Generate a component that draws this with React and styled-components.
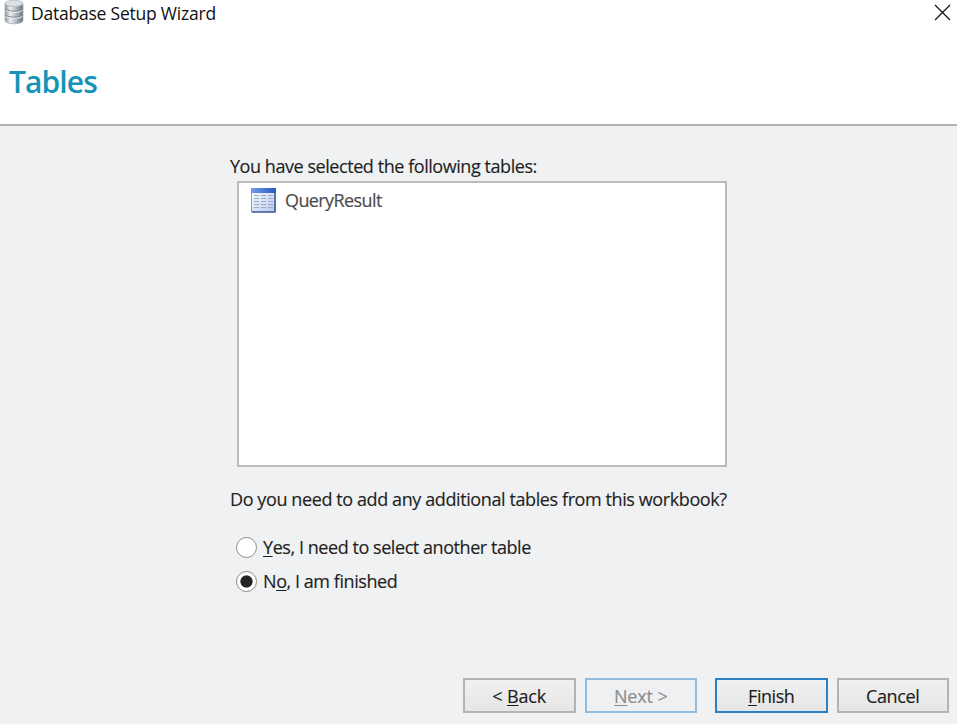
import React from "react";
import styled, { createGlobalStyle } from "styled-components";

const GlobalStyle = createGlobalStyle`
  * { box-sizing: border-box; }
  html, body { margin: 0; height: 100%; overflow: hidden; }
  body { font-family: "Open Sans", "Noto Sans", sans-serif; font-size: 18px; color: #1f1f1f; background: #f0f1f3; }
`;

const Window = styled.div`
  display: flex;
  flex-direction: column;
  width: 957px;
  height: 724px;
  background: #f0f1f3;
`;

const Header = styled.header`
  display: flex;
  flex-direction: column;
  height: 126px;
  background: #fff;
  border-bottom: 2px solid #b0b2b4;
`;

const TitleBar = styled.div`
  display: flex;
  align-items: center;
  height: 25px;
  padding: 0 6px 0 4px;
`;

const Text = styled.span`
  white-space: pre;
  letter-spacing: ${(p) => (p.$spacing === undefined ? -0.44 : p.$spacing)}px;
  -webkit-text-stroke: 0.15px currentColor;
  u { text-decoration-thickness: 1px; text-underline-offset: 2px; text-decoration-skip-ink: none; }
`;

const WindowTitle = styled(Text)`
  flex: 1;
  margin-left: 7px;
  font-size: 17.5px;
  color: #111;
  -webkit-text-stroke: 0;
`;

const CloseButton = styled.button`
  display: flex;
  padding: 0;
  border: 0;
  background: none;
`;

const PageTitle = styled.h1`
  margin: 36px 0 0 9px;
  font-size: 30px;
  line-height: 42px;
  font-weight: 600;
  letter-spacing: -0.9px;
  color: #1893b8;
`;

const Content = styled.main`
  display: flex;
  flex-direction: column;
  flex: 1;
  padding: 27px 0 0 230px;
`;

const Prompt = styled.p`
  display: flex;
  margin: 0;
  line-height: 26px;
`;

const TableList = styled.ul`
  width: 490px;
  height: 286px;
  margin: 2px 0 0 7px;
  padding: 4px 0 0 12px;
  list-style: none;
  background: #fff;
  border: 2px solid #b9bbbd;
`;

const TableItem = styled.li`
  display: flex;
  align-items: center;
  gap: 9px;
  height: 26px;
  color: #4a4a4a;
`;

const Question = styled(Prompt)`
  margin-top: 19px;
`;

const Options = styled.div`
  display: flex;
  flex-direction: column;
  gap: 8px;
  margin: 22px 0 0 6px;
`;

const Option = styled.label`
  display: flex;
  align-items: center;
  gap: 6px;
  height: 26px;
`;

const Radio = styled.input`
  appearance: none;
  width: 21px;
  height: 21px;
  margin: 0;
  border: 1.5px solid #8b8b8b;
  border-radius: 50%;
  background: ${(p) => (p.checked ? "radial-gradient(circle, #242424 5.7px, #fff 6.5px)" : "#fff")};
`;

const Footer = styled.footer`
  display: flex;
  justify-content: flex-end;
  gap: 9px;
  height: 46px;
  padding-right: 8px;
`;

const Button = styled.button`
  width: 112.5px;
  height: 35px;
  margin: 0 0 0 ${(p) => p.$offset || 0}px;
  padding: 0;
  border: 2px solid ${(p) => p.$border || "#b2b3b5"};
  background: ${(p) => (p.disabled ? "#eff0f2" : "linear-gradient(#f0f0f0, #e6e6e6)")};
  font: inherit;
  color: ${(p) => (p.disabled ? "#8b8d90" : "#1c1c1c")};
`;

const Icon = styled.svg`
  display: block;
  flex: none;
`;

const DatabaseIcon = () => (
  <Icon width="20" height="25" viewBox="0 0 20 26" preserveAspectRatio="none">
    <defs>
      <linearGradient id="metal">
        <stop offset="0" stopColor="#8b949c" />
        <stop offset=".3" stopColor="#eceef0" />
        <stop offset=".55" stopColor="#bcc3c9" />
        <stop offset="1" stopColor="#69737d" />
      </linearGradient>
    </defs>
    <path d="M1 4V21C1 26 19 26 19 21V4Z" fill="url(#metal)" stroke="#a1a9b0" strokeWidth=".7" />
    <ellipse cx="10" cy="3.5" rx="9" ry="3.2" fill="#dde0e3" stroke="#a7aeb5" strokeWidth=".7" />
    <path d="M1 9.2C3 12.5 17 12.5 19 9.2M1 15.4C3 18.7 17 18.7 19 15.4" fill="none" stroke="#7b858e" strokeWidth="1.1" />
    <path d="M1.5 10.5C4 13.7 16 13.7 18.5 10.5M1.5 16.7C4 19.9 16 19.9 18.5 16.7" fill="none" stroke="#edf0f2" strokeWidth="1" />
  </Icon>
);

const TableIcon = () => (
  <Icon width="25" height="25" viewBox="0 0 25 25">
    <defs>
      <linearGradient id="sheet" x2="1" y2="1">
        <stop stopColor="#fff" />
        <stop offset="1" stopColor="#b5c8eb" />
      </linearGradient>
      <linearGradient id="heading">
        <stop stopColor="#7499e8" />
        <stop offset="1" stopColor="#285ac4" />
      </linearGradient>
    </defs>
    <path d="M.5.5H24V24H.5Z" fill="url(#sheet)" stroke="#8d9fc6" />
    <path d="M0 0H25V5H0Z" fill="url(#heading)" />
    <path d="M24 4V24H1" fill="none" stroke="#4b629a" strokeWidth="1.7" />
    <path d="M3 7.5H22M3 10.5H22M3 13.5H22M3 16.5H22M3 19.5H22" stroke="#9eabc4" strokeDasharray="5 2" />
  </Icon>
);

const CloseIcon = () => (
  <Icon width="17" height="17" viewBox="0 0 17 17">
    <path d="M1 1L16 16M16 1L1 16" stroke="#111" strokeWidth="1.2" />
  </Icon>
);

export default function App() {
  const [answer, setAnswer] = React.useState("no");
  return (
    <Window>
      <GlobalStyle />
      <Header>
        <TitleBar>
          <DatabaseIcon />
          <WindowTitle $spacing={-0.22}>Database Setup Wizard</WindowTitle>
          <CloseButton aria-label="Close"><CloseIcon /></CloseButton>
        </TitleBar>
        <PageTitle>Tables</PageTitle>
      </Header>
      <Content>
        <Prompt><Text>You have selected the following tables:</Text></Prompt>
        <TableList>
          <TableItem><TableIcon /><Text $spacing={-0.6}>QueryResult</Text></TableItem>
        </TableList>
        <Question><Text $spacing={-0.4}>Do you need to add any additional tables from this workbook?</Text></Question>
        <Options>
          <Option>
            <Radio type="radio" name="more" checked={answer === "yes"} onChange={() => setAnswer("yes")} />
            <Text><u>Y</u>es, I need to select another table</Text>
          </Option>
          <Option>
            <Radio type="radio" name="more" checked={answer === "no"} onChange={() => setAnswer("no")} />
            <Text>N<u>o</u>, I am finished</Text>
          </Option>
        </Options>
      </Content>
      <Footer>
        <Button><Text $spacing={-0.15}>{"< "}<u>B</u>ack</Text></Button>
        <Button disabled $border="#91bcdf"><Text $spacing={-0.15}><u>N</u>ext {">"}</Text></Button>
        <Button $offset={9} $border="#2b7fc3"><Text><u>F</u>inish</Text></Button>
        <Button><Text $spacing={-0.35}>Cancel</Text></Button>
      </Footer>
    </Window>
  );
}
